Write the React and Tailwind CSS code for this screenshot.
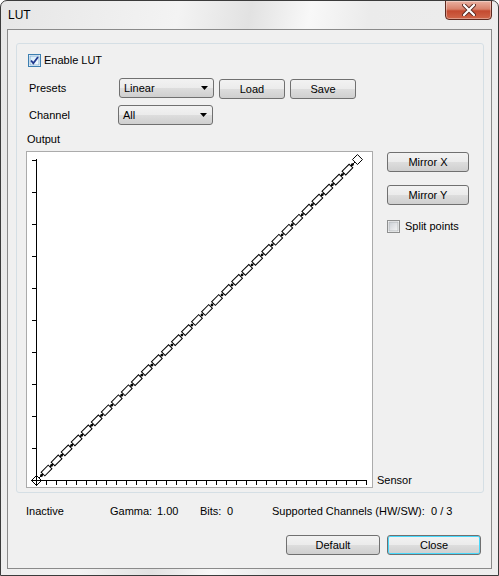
import React from "react";

const face =
  "rounded-[3px] border border-[#707070] bg-[linear-gradient(#f2f2f2_0%,#ebebeb_50%,#dddddd_51%,#cfcfcf_100%)] text-[11px] leading-[13px] text-black";

const Button = ({ children, className = "" }) => (
  <div className={`flex items-center justify-center ${face} ${className}`}>{children}</div>
);

const Combo = ({ value, className = "" }) => (
  <div className={`flex items-center justify-between pl-[4px] pr-[4px] ${face} ${className}`}>
    <span>{value}</span>
    <svg width="8" height="5" viewBox="0 0 8 5">
      <path d="M0 0 H7 L3.5 4 Z" fill="#000" />
    </svg>
  </div>
);

const CheckBox = ({ checked }) => (
  <svg width="13" height="13" viewBox="0 0 13 13" className="shrink-0">
    <defs>
      <linearGradient id={checked ? "cbOn" : "cbOff"} x1="0" y1="0" x2="1" y2="1">
        <stop offset="0" stopColor={checked ? "#d6ecfb" : "#cbcfd5"} />
        <stop offset="1" stopColor={checked ? "#f4fafe" : "#f6f6f6"} />
      </linearGradient>
    </defs>
    <rect x="0.5" y="0.5" width="12" height="12" fill="#fff" stroke={checked ? "#3c7fb1" : "#8e8f8f"} />
    <rect x="2" y="2" width="9" height="9" fill={`url(#${checked ? "cbOn" : "cbOff"})`} stroke={checked ? "#79a7ce" : "#b0b3b7"} strokeWidth="0.8" />
    {checked && (
      <path d="M3 6.5 L5.3 9.2 L10 3" fill="none" stroke="#21398f" strokeWidth="1.8" />
    )}
  </svg>
);

const Graph = () => {
  const pts = Array.from({ length: 33 }, (_, i) => [36.5 + i * 10.03, 479.5 - i * 10.03]);
  const yTicks = Array.from({ length: 11 }, (_, i) => 479 - i * 32);
  const xTicks = Array.from({ length: 33 }, (_, i) => 46 + i * 10);
  return (
    <svg width="345" height="335" viewBox="27 151 345 335" className="block">
      <line x1="36.5" y1="158" x2="36.5" y2="480" stroke="#000" />
      <line x1="36" y1="479.5" x2="367" y2="479.5" stroke="#000" />
      {yTicks.map((y) => (
        <line key={y} x1="32" y1={y + 0.5} x2="36" y2={y + 0.5} stroke="#000" />
      ))}
      {xTicks.map((x) => (
        <line key={x} x1={x + 0.5} y1="479" x2={x + 0.5} y2="484" stroke="#000" />
      ))}
      <line x1={pts[0][0]} y1={pts[0][1]} x2={pts[32][0]} y2={pts[32][1]} stroke="#000" />
      {pts.slice(1, 32).map(([x, y], i) => (
        <rect
          key={i}
          x={x - 5}
          y={y - 2.6}
          width="10"
          height="5.2"
          fill="#fff"
          stroke="#000"
          strokeWidth="1"
          transform={`rotate(-45 ${x} ${y})`}
        />
      ))}
      {pts.slice(0, 32).map(([x, y], i) => (
        <circle key={i} cx={x + 5} cy={y - 5} r="1.4" fill="#000" />
      ))}
      <path
        d={`M${pts[32][0]} ${pts[32][1] - 5} l5 5 l-5 5 l-5 -5 Z`}
        fill="#fff"
        stroke="#000"
        strokeWidth="1"
      />
      <path d="M36.5 474.5 l5 5 l-5 5 l-5 -5 Z" fill="#fff" stroke="#000" strokeWidth="1" />
      <line x1="36.5" y1="474" x2="36.5" y2="485" stroke="#000" />
      <line x1="31" y1="479.5" x2="42" y2="479.5" stroke="#000" />
    </svg>
  );
};

export default function App() {
  return (
    <div
      className="relative w-[499px] h-[576px] overflow-hidden rounded-t-[7px] border border-[#3b3b3b] bg-[linear-gradient(100deg,#e6e6e6_0%,#f3f3f3_30%,#e2e2e2_42%,#f8f8f8_52%,#ebebeb_62%,#eeeeee_100%)] text-black"
      style={{ fontFamily: '"Liberation Sans", Arial, sans-serif' }}
    >
      {/* Title bar */}
      <div className="h-[28px] pl-[7px] pt-[7px] text-[12px] leading-[15px]">LUT</div>
      <div className="absolute top-[-1px] right-[6px] flex h-[20px] w-[47px] items-center justify-center rounded-b-[4px] border border-[#5e2a20] bg-[linear-gradient(#eab1a2_0%,#d8826c_45%,#c44a30_55%,#d0664a_100%)] shadow-[inset_0_0_0_1px_rgba(255,255,255,0.35)]">
        <svg width="14" height="12" viewBox="0 0 14 12">
          <path d="M2 1 L12 11 M12 1 L2 11" stroke="#5a2a22" strokeWidth="4" strokeLinecap="round" />
          <path d="M2 1 L12 11 M12 1 L2 11" stroke="#fff" strokeWidth="2.2" strokeLinecap="round" />
        </svg>
      </div>

      {/* Client area */}
      <div className="ml-[6px] flex h-[540px] w-[485px] flex-col border border-[#8a8a8a] bg-[#f0f0f0] text-[11px] leading-[13px]">
        {/* Group box */}
        <div className="ml-[8px] mt-[13px] flex h-[450px] w-[468px] flex-col rounded-[3px] border border-[#d5dfe5] pl-[9px] pt-[10px]">
          <div className="ml-[2px] flex items-center gap-[3px]">
            <CheckBox checked />
            <span>Enable LUT</span>
          </div>

          <div className="mt-[10px] flex items-center">
            <span className="ml-[3px] w-[90px]">Presets</span>
            <Combo value="Linear" className="h-[20px] w-[95px]" />
            <Button className="ml-[5px] mt-[2px] h-[20px] w-[66px]">Load</Button>
            <Button className="ml-[5px] mt-[2px] h-[20px] w-[66px]">Save</Button>
          </div>

          <div className="mt-[6px] flex items-center">
            <span className="ml-[3px] w-[89px]">Channel</span>
            <Combo value="All" className="h-[20px] w-[95px]" />
          </div>

          <div className="mt-[8px] ml-[1px]">Output</div>

          <div className="mt-[5px] flex">
            <div className="h-[337px] w-[347px] border border-[#ababab] bg-white">
              <Graph />
            </div>
            <div className="flex flex-col justify-between pl-[4px] pb-[1px]">
              <div className="ml-[10px] mt-[1px] flex flex-col">
                <Button className="h-[20px] w-[82px]">Mirror X</Button>
                <Button className="mt-[13px] h-[20px] w-[82px]">Mirror Y</Button>
                <div className="mt-[15px] flex items-center gap-[5px]">
                  <CheckBox />
                  <span>Split points</span>
                </div>
              </div>
              <span>Sensor</span>
            </div>
          </div>
        </div>

        {/* Status line */}
        <div className="ml-[18px] mt-[12px] flex">
          <span className="w-[84px]">Inactive</span>
          <span className="w-[47px]">Gamma:</span>
          <span className="w-[43px]">1.00</span>
          <span className="w-[27px]">Bits:</span>
          <span className="w-[45px]">0</span>
          <span className="w-[159px]">Supported Channels (HW/SW):</span>
          <span>0 / 3</span>
        </div>

        {/* Dialog buttons */}
        <div className="mr-[10px] mt-[17px] flex justify-end gap-[7px]">
          <Button className="h-[20px] w-[94px]">Default</Button>
          <Button className="h-[20px] w-[94px] border-[#3c7fb1] bg-[linear-gradient(#eaf6fd_0%,#d9f0fc_50%,#bee6fd_51%,#a7d9f5_100%)] shadow-[inset_0_0_0_1px_#48d8fb]">
            Close
          </Button>
        </div>
      </div>
    </div>
  );
}
